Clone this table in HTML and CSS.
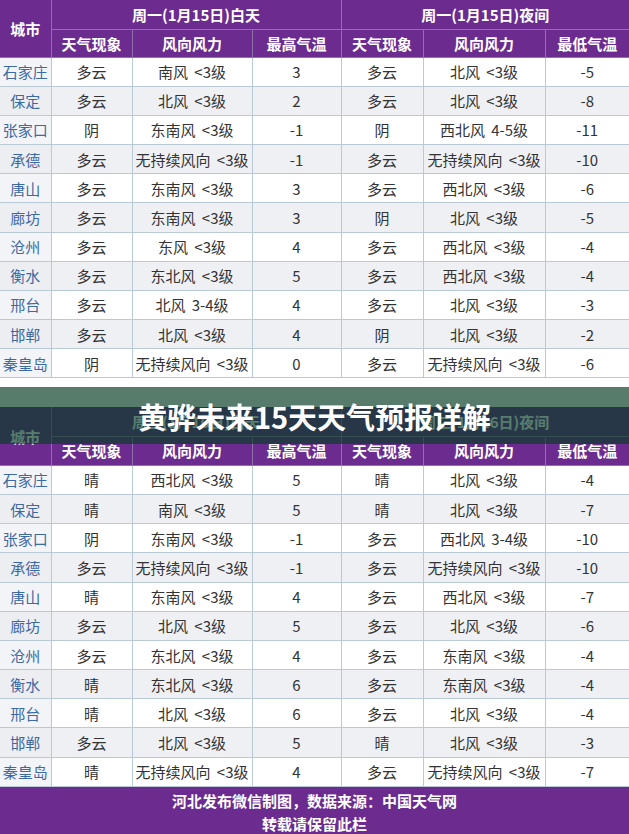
FILE: index.html
```html
<!DOCTYPE html>
<html lang="zh-CN">
<head>
<meta charset="utf-8">
<title>黄骅未来15天天气预报详解</title>
<link rel="stylesheet" href="styles.css">
</head>
<body>
<div class="sheet">
  <table class="wx">
    <colgroup>
      <col class="c-city"><col class="c-sky"><col class="c-wind"><col class="c-temp">
      <col class="c-sky2"><col class="c-wind2"><col class="c-temp2">
    </colgroup>
    <thead>
      <tr class="h1">
        <th rowspan="2" class="city-h">城市</th>
        <th colspan="3">周一(1月15日)白天</th>
        <th colspan="3">周一(1月15日)夜间</th>
      </tr>
      <tr class="h2">
        <th>天气现象</th><th>风向风力</th><th>最高气温</th>
        <th>天气现象</th><th>风向风力</th><th>最低气温</th>
      </tr>
    </thead>
    <tbody>
      <tr><td class="city">石家庄</td><td>多云</td><td>南风 &lt;3级</td><td>3</td><td>多云</td><td>北风 &lt;3级</td><td>-5</td></tr>
      <tr><td class="city">保定</td><td>多云</td><td>北风 &lt;3级</td><td>2</td><td>多云</td><td>北风 &lt;3级</td><td>-8</td></tr>
      <tr><td class="city">张家口</td><td>阴</td><td>东南风 &lt;3级</td><td>-1</td><td>阴</td><td>西北风 4-5级</td><td>-11</td></tr>
      <tr><td class="city">承德</td><td>多云</td><td>无持续风向 &lt;3级</td><td>-1</td><td>多云</td><td>无持续风向 &lt;3级</td><td>-10</td></tr>
      <tr><td class="city">唐山</td><td>多云</td><td>东南风 &lt;3级</td><td>3</td><td>多云</td><td>西北风 &lt;3级</td><td>-6</td></tr>
      <tr><td class="city">廊坊</td><td>多云</td><td>东南风 &lt;3级</td><td>3</td><td>阴</td><td>北风 &lt;3级</td><td>-5</td></tr>
      <tr><td class="city">沧州</td><td>多云</td><td>东风 &lt;3级</td><td>4</td><td>多云</td><td>西北风 &lt;3级</td><td>-4</td></tr>
      <tr><td class="city">衡水</td><td>多云</td><td>东北风 &lt;3级</td><td>5</td><td>多云</td><td>西北风 &lt;3级</td><td>-4</td></tr>
      <tr><td class="city">邢台</td><td>多云</td><td>北风 3-4级</td><td>4</td><td>多云</td><td>北风 &lt;3级</td><td>-3</td></tr>
      <tr><td class="city">邯郸</td><td>多云</td><td>北风 &lt;3级</td><td>4</td><td>阴</td><td>北风 &lt;3级</td><td>-2</td></tr>
      <tr><td class="city">秦皇岛</td><td>阴</td><td>无持续风向 &lt;3级</td><td>0</td><td>多云</td><td>无持续风向 &lt;3级</td><td>-6</td></tr>
    </tbody>
  </table>

  <div class="gap"></div>

  <table class="wx wx2">
    <colgroup>
      <col class="c-city"><col class="c-sky"><col class="c-wind"><col class="c-temp">
      <col class="c-sky2"><col class="c-wind2"><col class="c-temp2">
    </colgroup>
    <thead>
      <tr class="h1">
        <th rowspan="2" class="city-h">城市</th>
        <th colspan="3">周二(1月16日)白天</th>
        <th colspan="3">周二(1月16日)夜间</th>
      </tr>
      <tr class="h2">
        <th>天气现象</th><th>风向风力</th><th>最高气温</th>
        <th>天气现象</th><th>风向风力</th><th>最低气温</th>
      </tr>
    </thead>
    <tbody>
      <tr><td class="city">石家庄</td><td>晴</td><td>西北风 &lt;3级</td><td>5</td><td>晴</td><td>北风 &lt;3级</td><td>-4</td></tr>
      <tr><td class="city">保定</td><td>晴</td><td>南风 &lt;3级</td><td>5</td><td>晴</td><td>北风 &lt;3级</td><td>-7</td></tr>
      <tr><td class="city">张家口</td><td>阴</td><td>东南风 &lt;3级</td><td>-1</td><td>多云</td><td>西北风 3-4级</td><td>-10</td></tr>
      <tr><td class="city">承德</td><td>多云</td><td>无持续风向 &lt;3级</td><td>-1</td><td>多云</td><td>无持续风向 &lt;3级</td><td>-10</td></tr>
      <tr><td class="city">唐山</td><td>晴</td><td>东南风 &lt;3级</td><td>4</td><td>多云</td><td>西北风 &lt;3级</td><td>-7</td></tr>
      <tr><td class="city">廊坊</td><td>多云</td><td>北风 &lt;3级</td><td>5</td><td>多云</td><td>北风 &lt;3级</td><td>-6</td></tr>
      <tr><td class="city">沧州</td><td>多云</td><td>东北风 &lt;3级</td><td>4</td><td>多云</td><td>东南风 &lt;3级</td><td>-4</td></tr>
      <tr><td class="city">衡水</td><td>晴</td><td>东北风 &lt;3级</td><td>6</td><td>多云</td><td>东南风 &lt;3级</td><td>-4</td></tr>
      <tr><td class="city">邢台</td><td>晴</td><td>北风 &lt;3级</td><td>6</td><td>多云</td><td>北风 &lt;3级</td><td>-4</td></tr>
      <tr><td class="city">邯郸</td><td>多云</td><td>北风 &lt;3级</td><td>5</td><td>晴</td><td>北风 &lt;3级</td><td>-3</td></tr>
      <tr><td class="city">秦皇岛</td><td>晴</td><td>无持续风向 &lt;3级</td><td>4</td><td>多云</td><td>无持续风向 &lt;3级</td><td>-7</td></tr>
    </tbody>
  </table>

  <div class="footer">
    <p>河北发布微信制图，数据来源：中国天气网</p>
    <p>转载请保留此栏</p>
  </div>

  <div class="banner">
    <h1 class="title">黄骅未来15天天气预报详解</h1>
  </div>
</div>
</body>
</html>
```

FILE: styles.css
```css
html, body {
  margin: 0;
  padding: 0;
  background: #ffffff;
}

body {
  width: 629px;
  height: 834px;
  overflow: hidden;
  font-family: "Noto Sans CJK SC", "Noto Sans", sans-serif;
}

.sheet {
  position: relative;
  width: 629px;
}

.wx {
  width: 629px;
  border-collapse: collapse;
  table-layout: fixed;
  font-size: 15px;
  color: #333333;
}

.c-city { width: 51px; }
.c-sky { width: 81px; }
.c-wind { width: 120px; }
.c-temp { width: 89px; }
.c-sky2 { width: 82px; }
.c-wind2 { width: 122px; }
.c-temp2 { width: 84px; }

.wx tr {
  height: 29.18px;
}

.wx .h1 {
  height: 29px;
}

.wx .h2 {
  height: 28px;
}

.wx2 .h2 {
  height: 29px;
}

.wx th {
  background: #6b2b8f;
  color: #ffffff;
  font-weight: bold;
  font-size: 15px;
  padding: 0;
  height: auto;
  border: 1px solid #9270ae;
  line-height: 15px;
  text-align: center;
  white-space: nowrap;
}

.wx .h1 th {
  border-top: none;
}

.wx th.city-h {
  border-left: none;
}

.wx th:last-child {
  border-right: none;
}

.wx td {
  padding: 0;
  text-align: center;
  border: 1px solid #b9c9d6;
  line-height: 15px;
  white-space: nowrap;
  background: #ffffff;
  word-spacing: 3px;
}

.wx tbody tr:nth-child(even) td {
  background: #eff0f3;
}

.wx td:first-child {
  border-left: none;
}

.wx td:last-child {
  border-right: none;
}

.wx td.city {
  color: #3d69a3;
  background: #f3f4f7;
}

.wx tbody tr:nth-child(even) td.city {
  background: #eceef2;
}

.wx tbody tr:last-child td {
  border-bottom: 1px solid #b9c9d6;
}

.gap {
  height: 29px;
}

.footer {
  background: #6b2b8f;
  color: #ffffff;
  font-weight: bold;
  font-size: 15px;
  text-align: center;
  height: 48px;
  padding-top: 2px;
  box-sizing: border-box;
}

.footer p {
  margin: 0;
  line-height: 23px;
}

.banner {
  position: absolute;
  left: 0;
  right: 0;
  top: 387px;
  height: 57px;
  background: rgba(8, 62, 38, 0.68);
  display: flex;
  align-items: center;
  justify-content: center;
}

.title {
  margin: 0;
  color: #ffffff;
  font-size: 29px;
  font-weight: bold;
  line-height: 1;
  padding-top: 2px;
}
```
